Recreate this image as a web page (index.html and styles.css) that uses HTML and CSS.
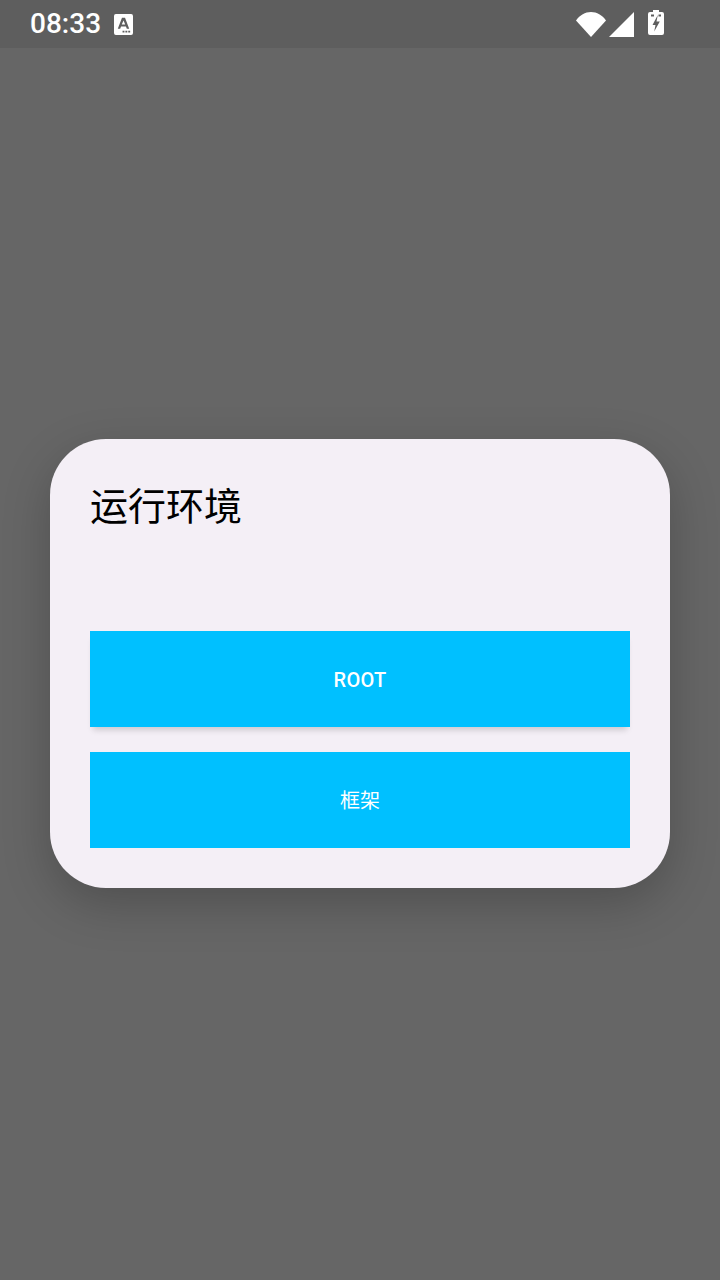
FILE: index.html
```html
<!DOCTYPE html>
<html lang="zh">
<head>
<meta charset="utf-8">
<title>运行环境</title>
<link rel="stylesheet" href="styles.css">
</head>
<body>
<div class="screen">
  <header class="status">
    <div class="status-left">
      <span class="time">08:33</span>
      <svg class="a-icon" viewBox="0 0 20 22"><path fill="#fff" fill-rule="evenodd" d="M2 0h16a2 2 0 0 1 2 2v18a2 2 0 0 1-2 2H2a2 2 0 0 1-2-2V2a2 2 0 0 1 2-2zM8.400 4 4 15.500h2.500l.9-2.500h5.200l.9 2.500h2.500L11.600 4zM10 6.800l1.800 4.200H8.200zM9 17.500v2h2v-2zM12 17.500v2h2v-2zM15 17.500v2h2v-2z"/></svg>
    </div>
    <div class="status-right">
      <svg class="wifi" viewBox="0 0 30 25"><path fill="#fff" d="M0 8.500C4 3 9 0 15 0s11 3 15 8.500L15 25z"/></svg>
      <svg class="signal" viewBox="0 0 25 25"><path fill="#fff" d="M25 0v25H0z"/></svg>
      <svg class="battery" viewBox="0 0 16 25"><path fill="#fff" fill-rule="evenodd" d="M5 0h6v2h3a2 2 0 0 1 2 2v19a2 2 0 0 1-2 2H2a2 2 0 0 1-2-2V4a2 2 0 0 1 2-2h3zM3 4.500v2h3v-2zM10.500 4.500v2h2.500v-2zM9.800 5 4.500 15h3L6.200 21.500 11.800 11.500H8.500z"/></svg>
    </div>
  </header>
  <main class="scrim">
    <section class="dialog">
      <h1 class="title">运行环境</h1>
      <div class="actions">
        <button class="btn btn-raised"><span class="label label-latin">ROOT</span></button>
        <button class="btn"><span class="label label-cjk">框架</span></button>
      </div>
    </section>
  </main>
</div>
</body>
</html>
```

FILE: styles.css
```css
* { box-sizing: border-box; }
html, body { margin: 0; padding: 0; }
body {
  width: 720px;
  height: 1280px;
  overflow: hidden;
  font-family: Roboto, "Noto Sans CJK SC", sans-serif;
}
.screen {
  width: 720px;
  height: 1280px;
  display: flex;
  flex-direction: column;
  background: #666666;
}
.status {
  height: 48px;
  flex: none;
  background: #5e5e5e;
  display: flex;
  align-items: center;
  justify-content: space-between;
  padding: 0 56px 0 30px;
}
.status-left, .status-right { display: flex; align-items: center; }
.time {
  color: #fff;
  font-size: 28px;
  font-weight: 500;
  line-height: 48px;
  margin-top: -1px;
}
.a-icon { width: 19px; height: 21px; margin-left: 13px; }
.wifi { width: 30px; height: 25px; }
.signal { width: 25px; height: 25px; margin-left: 3px; }
.battery { width: 16px; height: 25px; margin-left: 14px; margin-top: -3px; }
.scrim {
  flex: 1;
  display: flex;
  flex-direction: column;
  align-items: center;
  padding-top: 391px;
}
.dialog {
  width: 620px;
  height: 449px;
  background: #f4eff6;
  border-radius: 56px;
  padding: 38px 40px 40px;
  display: flex;
  flex-direction: column;
  box-shadow: 0 16px 48px rgba(0, 0, 0, 0.22);
}
.title {
  margin: 0;
  font-size: 38px;
  font-weight: 400;
  line-height: 54px;
  color: #000;
  font-family: "Noto Sans CJK SC", sans-serif;
}
.actions {
  margin-top: auto;
  display: flex;
  flex-direction: column;
  gap: 25px;
}
.btn {
  display: block;
  width: 100%;
  height: 96px;
  border: 0;
  border-radius: 0;
  background: #00c0ff;
  color: #fff;
  padding: 0;
}
.btn-raised { box-shadow: 0 6px 6px -3px rgba(0, 0, 0, 0.16); }
.label { display: block; font-size: 20px; }
.label-latin {
  font-family: Roboto, sans-serif;
  font-weight: 500;
  letter-spacing: 0.25px;
  padding-top: 2px;
}
.label-cjk {
  font-family: "Noto Sans CJK SC", sans-serif;
  font-weight: 400;
  margin-top: -2px;
}
```
